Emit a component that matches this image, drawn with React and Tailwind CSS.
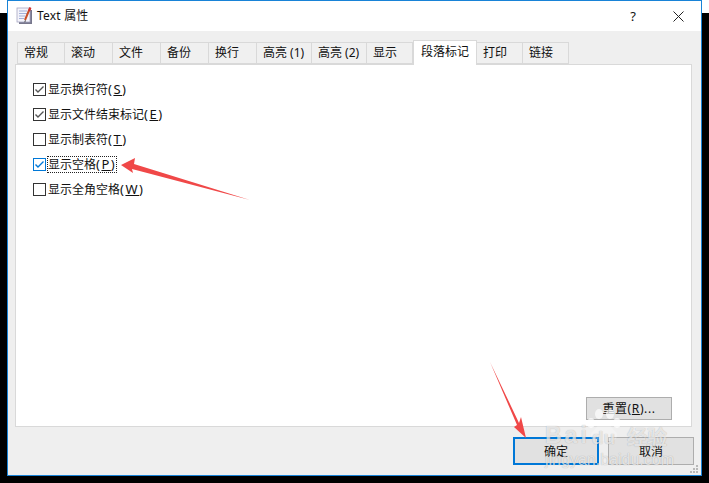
import React from 'react';

const tabs = [
  { label: '常规', w: 'w-[48px]' },
  { label: '滚动', w: 'w-[48px]' },
  { label: '文件', w: 'w-[48px]' },
  { label: '备份', w: 'w-[48px]' },
  { label: '换行', w: 'w-[48px]' },
  { label: '高亮 (1)', w: 'w-[55px]' },
  { label: '高亮 (2)', w: 'w-[55px]' },
  { label: '显示', w: 'w-[46px]' },
  { label: '段落标记', w: 'w-[64px]', active: true },
  { label: '打印', w: 'w-[46px]' },
  { label: '链接', w: 'w-[46px]' },
];

const options = [
  { label: '显示换行符', key: 'S', checked: true },
  { label: '显示文件结束标记', key: 'E', checked: true },
  { label: '显示制表符', key: 'T' },
  { label: '显示空格', key: 'P', checked: true, focused: true },
  { label: '显示全角空格', key: 'W' },
];

const Checkbox = ({ checked, focused }) => (
  <span className={`w-[13px] h-[13px] bg-white border shrink-0 flex items-center justify-center ${focused ? 'border-[#0078d7]' : 'border-[#333333]'}`}>
    {checked && (
      <svg width="11" height="11" viewBox="0 0 11 11" fill="none">
        <path d="M1.5 5.5 L4 8 L9.5 2.5" stroke={focused ? '#0078d7' : '#555555'} strokeWidth="1.4" />
      </svg>
    )}
  </span>
);

const NotepadIcon = () => (
  <svg width="17" height="18" viewBox="0 0 17 18">
    <rect x="3" y="3" width="13" height="14" fill="#77778c" />
    <rect x="1" y="1" width="13" height="14" fill="#f4f4fb" stroke="#a5a5c0" strokeWidth="0.8" />
    <path d="M3 4h8M3 6.500h8M3 9h6M3 11.500h5" stroke="#8f9fd0" strokeWidth="0.8" />
    <path d="M14 1 L9 13" stroke="#c8502a" strokeWidth="2" />
    <path d="M14.500 0.500 L13 4" stroke="#d03030" strokeWidth="2" />
    <path d="M9 13 L8.300 15.500 L10 14" fill="#333333" />
  </svg>
);

const Arrows = () => (
  <svg className="absolute left-0 top-0 pointer-events-none" width="709" height="483" viewBox="0 0 709 483">
    <polygon points="121,165 135,158 134,164 250,200 132,169 133,173" fill="#f04848" />
    <polygon points="490,362 519,423 521,417 526,438 514,427 517,425" fill="#f04848" />
  </svg>
);

const Watermark = () => (
  <>
    <svg className="absolute left-[586px] top-[409px] pointer-events-none text-white/70" width="36" height="40" viewBox="0 0 36 40" fill="currentColor">
      <ellipse cx="5" cy="14" rx="4" ry="5" />
      <ellipse cx="13" cy="5" rx="4" ry="5" />
      <ellipse cx="24" cy="5" rx="4" ry="5" />
      <ellipse cx="31" cy="14" rx="4" ry="5" />
      <path d="M18 13 C12 13 11 19 7 22 C3 25 5 32 11 32 L25 32 C31 32 33 25 29 22 C25 19 24 13 18 13 Z" fillOpacity="0.35" />
    </svg>
    <div className="absolute left-[545px] top-[424px] pointer-events-none text-white/70 leading-none [text-shadow:0_0_1px_rgba(0,0,0,0.3)]" style={{ fontFamily: '"Liberation Sans", sans-serif' }}>
      <div className="flex items-end h-[23px]">
        <span className="text-[23px] font-bold tracking-[3px]">Bai</span>
        <span className="text-[19px] font-bold ml-[2px]">du</span>
        <span className="text-[20px] font-bold ml-[12px]" style={{ fontFamily: '"Noto Sans CJK SC", sans-serif' }}>经验</span>
      </div>
      <div className="text-[16px] mt-[5px]">jingyan.baidu.com</div>
    </div>
  </>
);

export default function App() {
  return (
    <div className="relative w-[709px] h-[483px] bg-black overflow-hidden" style={{ fontFamily: '"Noto Sans", "Noto Sans CJK SC", sans-serif' }}>
      {/* white strip behind the window, left over from the screen capture */}
      <div className="absolute inset-x-0 top-0 h-[13px] bg-white" />

      <div className="relative ml-[7px] w-[695px] h-[476px] border border-[#1883d7] bg-[#efefef] flex flex-col text-[12px] text-[#111111]">
        {/* Title bar */}
        <div className="h-[30px] bg-white flex items-center pl-[8px] shrink-0">
          <NotepadIcon />
          <span className="ml-[4px] text-[12px] leading-none tracking-[0.2px]">Text 属性</span>
          <span className="ml-auto mr-[37px] text-[13px] leading-none">?</span>
          <svg className="mr-[17px]" width="11" height="11" viewBox="0 0 11 11" fill="none">
            <path d="M0.5 0.500 L10.500 10.500 M10.500 0.500 L0.500 10.500" stroke="#222222" strokeWidth="1" />
          </svg>
        </div>

        {/* Tabs */}
        <div className="flex items-end h-[33px] ml-[9px] shrink-0 relative z-10">
          {tabs.map((tab, i) => (
            <div
              key={tab.label}
              className={`${tab.w} flex items-center border-t border-r border-[#d9d9d9] shrink-0 ${i === 0 ? 'border-l' : ''} ${
                tab.active
                  ? 'h-[25px] bg-white border-l -mb-px pb-[3px] pl-[7px]'
                  : 'h-[22px] bg-[#f0f0f0] border-b pl-[6px]'
              }`}
            >
              {tab.label}
            </div>
          ))}
        </div>

        {/* Panel */}
        <div className="ml-[7px] w-[677px] h-[363px] bg-white border border-[#d9d9d9] shrink-0 flex flex-col justify-between">
          <div className="pt-[16px] pl-[17px] flex flex-col gap-[8px]">
            {options.map((opt) => (
              <div key={opt.key} className="flex items-center h-[17px]">
                <Checkbox checked={opt.checked} focused={opt.focused} />
                <span className={`ml-[2px] leading-[15px] ${opt.focused ? 'outline outline-1 outline-dotted outline-[#222222]' : ''}`}>
                  {opt.label}
                  <span className="text-[13px] tracking-[1.5px]">(<span className="underline">{opt.key}</span>)</span>
                </span>
              </div>
            ))}
          </div>
          <div className="flex justify-end pr-[19px] pb-[6px]">
            <button className="w-[86px] h-[23px] pt-[1px] bg-[#e1e1e1] border border-[#adadad] text-[12px] leading-none tracking-[0.6px]">
              重置(<span className="underline">R</span>)...
            </button>
          </div>
        </div>

        {/* Footer buttons */}
        <div className="flex justify-end gap-[9px] pr-[7px] pt-[10px]">
          <button className="w-[86px] h-[28px] pt-[1px] bg-[#e1e1e1] border-2 border-[#0078d7] text-[12px] leading-none">确定</button>
          <button className="w-[86px] h-[28px] pt-[1px] bg-[#e1e1e1] border border-[#adadad] text-[12px] leading-none">取消</button>
        </div>
      </div>

      <Arrows />
      <Watermark />

      {/* Resize grip */}
      <div className="absolute left-[690px] top-[465px] grid grid-cols-3 gap-[1px] pointer-events-none">
        {[0, 1, 2, 3, 4, 5, 6, 7, 8].map((i) => (
          <span key={i} className={`w-[2px] h-[2px] ${[0, 1, 3].includes(i) ? 'bg-transparent' : 'bg-[#b8b8b8]'}`} />
        ))}
      </div>
    </div>
  );
}
